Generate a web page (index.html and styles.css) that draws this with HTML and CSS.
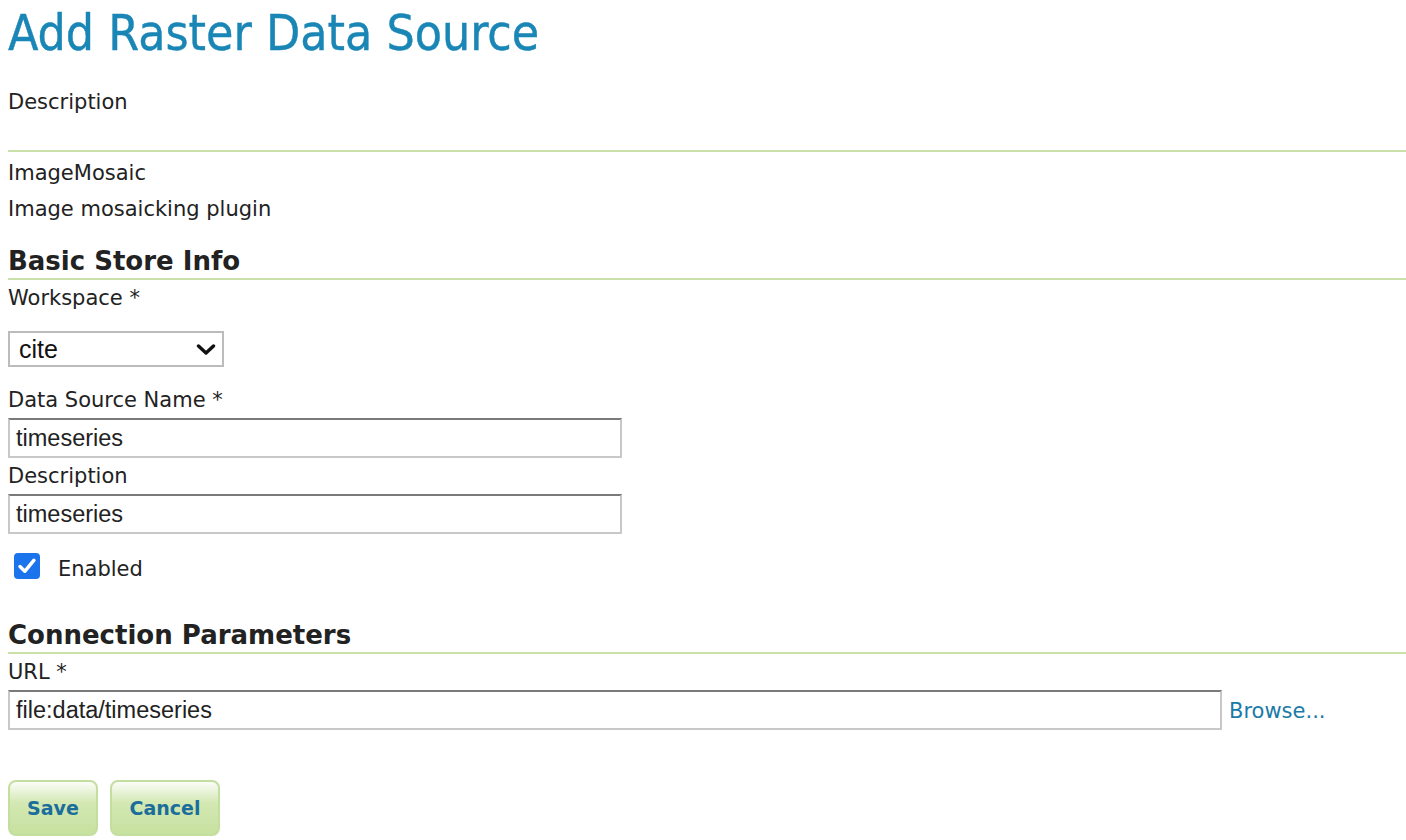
FILE: index.html
```html
<!DOCTYPE html>
<html>
<head>
<meta charset="utf-8">
<link rel="stylesheet" href="styles.css">
<title>Add Raster Data Source</title>
</head>
<body>
<div class="page">
  <h1 class="title">Add Raster Data Source</h1>
  <div class="desc-label">Description</div>
  <div class="rule"></div>
  <div class="line">ImageMosaic</div>
  <div class="line">Image mosaicking plugin</div>

  <h3 class="section">Basic Store Info</h3>
  <div class="label">Workspace *</div>
  <div class="select-wrap">
    <select class="select"><option>cite</option></select>
    <svg class="chev" width="20" height="12" viewBox="0 0 20 12"><path d="M2.5 2 L10 9 L17.5 2" fill="none" stroke="#111" stroke-width="3.4" stroke-linecap="round" stroke-linejoin="round"/></svg>
  </div>
  <div class="label gap">Data Source Name *</div>
  <input class="field short" type="text" value="timeseries">
  <div class="label">Description</div>
  <input class="field short" type="text" value="timeseries">
  <label class="check-row">
    <span class="checkbox"><svg width="26" height="26" viewBox="0 0 26 26"><path d="M6 13.5 L10.8 18.3 L20 7.2" fill="none" stroke="#fff" stroke-width="3.4" stroke-linecap="round" stroke-linejoin="round"/></svg></span>
    <span class="check-text">Enabled</span>
  </label>

  <h3 class="section conn">Connection Parameters</h3>
  <div class="label">URL *</div>
  <div class="url-row">
    <input class="field long" type="text" value="file:data/timeseries">
    <a class="browse" href="#">Browse...</a>
  </div>

  <div class="buttons">
    <button class="btn save">Save</button>
    <button class="btn cancel">Cancel</button>
  </div>
</div>
</body>
</html>
```

FILE: styles.css
```css
html, body {
  margin: 0;
  padding: 0;
  background: #fff;
}
body {
  font-family: "DejaVu Sans", Verdana, sans-serif;
  font-size: 21px;
  color: #222;
}
.page {
  padding-left: 8px;
}
.title {
  margin: 0;
  font-family: "DejaVu Sans Condensed", "DejaVu Sans", sans-serif;
  font-weight: normal;
  font-size: 49.5px;
  line-height: 66px;
  color: #1a86b6;
  -webkit-text-stroke: 0.4px #1a86b6;
}
.desc-label {
  margin-top: 24px;
  line-height: 24px;
}
.rule {
  margin-top: 36px;
  margin-bottom: 3px;
  height: 2px;
  background: #c9e0a8;
}
.line {
  line-height: 36px;
}
.section {
  margin: 17px 0 0 0;
  font-size: 26px;
  font-weight: bold;
  line-height: 34px;
  color: #222;
  border-bottom: 2px solid #c9e0a8;
}
.section.conn {
  margin-top: 37px;
}
.label {
  line-height: 36px;
}
.label.gap {
  margin-top: 15px;
}
.select-wrap {
  position: relative;
  width: 216px;
  height: 36px;
  margin-top: 15px;
}
.select {
  appearance: none;
  -webkit-appearance: none;
  box-sizing: border-box;
  width: 216px;
  height: 36px;
  margin: 0;
  padding: 0 0 0 9px;
  border: 2px solid #bcbcbc;
  border-radius: 0;
  background: #fff;
  font-family: "Liberation Sans", Arial, sans-serif;
  font-size: 25px;
  color: #111;
}
.chev {
  position: absolute;
  right: 8px;
  top: 13px;
  pointer-events: none;
}
.field {
  display: block;
  box-sizing: border-box;
  height: 40px;
  margin: 0;
  padding: 0 0 0 6px;
  border: 2px solid #c8c8c8;
  border-top-color: #7a7a7a;
  border-radius: 0;
  background: #fff;
  font-family: "Liberation Sans", Arial, sans-serif;
  font-size: 23.5px;
  color: #222;
  outline: none;
}
.field.short {
  width: 614px;
}
.field.long {
  width: 1214px;
}
.check-row {
  display: flex;
  align-items: center;
  margin-top: 17px;
  padding-left: 6px;
  height: 30px;
}
.checkbox {
  display: block;
  width: 26px;
  height: 26px;
  border-radius: 4px;
  background: #1b74ec;
}
.checkbox svg {
  display: block;
}
.check-text {
  margin-left: 18px;
  margin-top: 6px;
}
.url-row {
  display: flex;
  align-items: center;
  gap: 7px;
}
.browse {
  color: #1a7aa8;
  text-decoration: none;
  margin-top: 2px;
}
.buttons {
  display: flex;
  gap: 12px;
  margin-top: 50px;
}
.btn {
  box-sizing: border-box;
  height: 56px;
  padding: 0;
  border: 2px solid #c4dea0;
  border-radius: 8px;
  background: linear-gradient(to bottom, #fbfdf8 0%, #d3e8b3 40%, #c7e19f 100%);
  font-family: "DejaVu Sans", Verdana, sans-serif;
  font-weight: bold;
  font-size: 19px;
  color: #1b6e9b;
}
.btn.save {
  width: 90px;
}
.btn.cancel {
  width: 110px;
}
```
